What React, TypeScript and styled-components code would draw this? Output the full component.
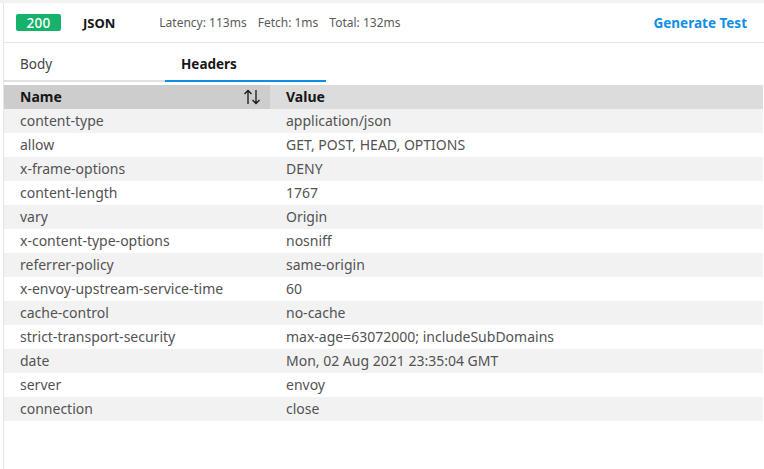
import React, { useState } from "react";
import styled, { createGlobalStyle } from "styled-components";

const Global = createGlobalStyle`
  html, body { margin: 0; padding: 0; background: #ffffff; }
  body { font-family: "Noto Sans", "Open Sans", Arial, sans-serif; }
  * { box-sizing: border-box; }
`;

const Frame = styled.div`
  width: 764px;
  height: 469px;
  background: #fff;
  border-top: 3px solid #f2f2f2;
  padding-left: 3px;
  overflow: hidden;
`;

const Panel = styled.div`
  height: 100%;
  border-left: 1px solid #e6e6e6;
  display: flex;
  flex-direction: column;
`;

const TopBar = styled.div`
  height: 40px;
  display: flex;
  align-items: center;
  padding: 0 17px 0 12px;
  border-bottom: 1px solid #e8e8e8;
`;

const Badge = styled.span`
  display: inline-flex;
  align-items: center;
  justify-content: center;
  width: 45px;
  height: 17px;
  border-radius: 2px;
  background: #16b26b;
  color: #fff;
  font-size: 13.5px;
  font-weight: 500;
  letter-spacing: 0.3px;
`;

const Format = styled.span`
  margin-left: 22px;
  font-size: 13px;
  font-weight: 700;
  color: #161616;
`;

const Metrics = styled.div`
  margin-left: 44px;
  display: flex;
  gap: 11px;
  font-size: 12px;
  color: #5a5a5a;
`;

const Action = styled.button`
  margin-left: auto;
  border: 0;
  background: none;
  padding: 0;
  font-family: inherit;
  font-size: 13.5px;
  font-weight: 700;
  color: #0f8ee6;
  cursor: pointer;
`;

const Tabs = styled.div`
  display: flex;
  height: 39px;
`;

const Tab = styled.div<{ $active?: boolean }>`
  width: 161px;
  display: flex;
  align-items: center;
  padding-left: 16px;
  padding-top: 4px;
  font-size: 13.5px;
  font-weight: ${(p) => (p.$active ? 700 : 400)};
  color: ${(p) => (p.$active ? "#161616" : "#444")};
  border-bottom: 2px solid ${(p) => (p.$active ? "#0f8ee6" : "#e0e0e0")};
  cursor: pointer;
`;

const Table = styled.div`
  margin-top: 3px;
  margin-right: 1px;
  display: grid;
  grid-template-columns: 266px 1fr;
`;

const HeadCell = styled.div<{ $sorted?: boolean }>`
  height: 24px;
  display: flex;
  align-items: center;
  justify-content: space-between;
  padding-left: 16px;
  padding-bottom: 1px;
  font-size: 14px;
  font-weight: 700;
  color: #161616;
  background: ${(p) => (p.$sorted ? "#cdcdcd" : "#dcdcdc")};
`;

const SortIcon = styled.span`
  display: flex;
  align-items: center;
  justify-content: center;
  width: 36px;
  height: 23px;
  color: #161616;
`;

const Cell = styled.div<{ $zebra: boolean }>`
  height: 24px;
  display: flex;
  align-items: center;
  padding-left: 16px;
  padding-bottom: 1px;
  font-size: 14px;
  color: #525252;
  background: ${(p) => (p.$zebra ? "#f2f2f2" : "#ffffff")};
  white-space: nowrap;
`;

const headers: [string, string][] = [
  ["content-type", "application/json"],
  ["allow", "GET, POST, HEAD, OPTIONS"],
  ["x-frame-options", "DENY"],
  ["content-length", "1767"],
  ["vary", "Origin"],
  ["x-content-type-options", "nosniff"],
  ["referrer-policy", "same-origin"],
  ["x-envoy-upstream-service-time", "60"],
  ["cache-control", "no-cache"],
  ["strict-transport-security", "max-age=63072000; includeSubDomains"],
  ["date", "Mon, 02 Aug 2021 23:35:04 GMT"],
  ["server", "envoy"],
  ["connection", "close"],
];

const ArrowsVertical = () => (
  <svg width="18" height="18" viewBox="0 0 18 18" fill="none" stroke="#161616" strokeWidth="1.3">
    <path d="M5 16V2.5M1.5 6L5 2.5L8.5 6" />
    <path d="M13 2V15.5M9.5 12L13 15.5L16.5 12" />
  </svg>
);

export default function App() {
  const [tab, setTab] = useState("Headers");
  return (
    <>
      <Global />
      <Frame>
        <Panel>
          <TopBar>
            <Badge>200</Badge>
            <Format>JSON</Format>
            <Metrics>
              <span>Latency: 113ms</span>
              <span>Fetch: 1ms</span>
              <span>Total: 132ms</span>
            </Metrics>
            <Action>Generate Test</Action>
          </TopBar>
          <Tabs>
            {["Body", "Headers"].map((t) => (
              <Tab key={t} $active={tab === t} onClick={() => setTab(t)}>
                {t}
              </Tab>
            ))}
          </Tabs>
          <Table>
            <HeadCell $sorted>
              Name
              <SortIcon>
                <ArrowsVertical />
              </SortIcon>
            </HeadCell>
            <HeadCell>Value</HeadCell>
            {headers.map(([k, v], i) => (
              <React.Fragment key={k}>
                <Cell $zebra={i % 2 === 0}>{k}</Cell>
                <Cell $zebra={i % 2 === 0}>{v}</Cell>
              </React.Fragment>
            ))}
          </Table>
        </Panel>
      </Frame>
    </>
  );
}
